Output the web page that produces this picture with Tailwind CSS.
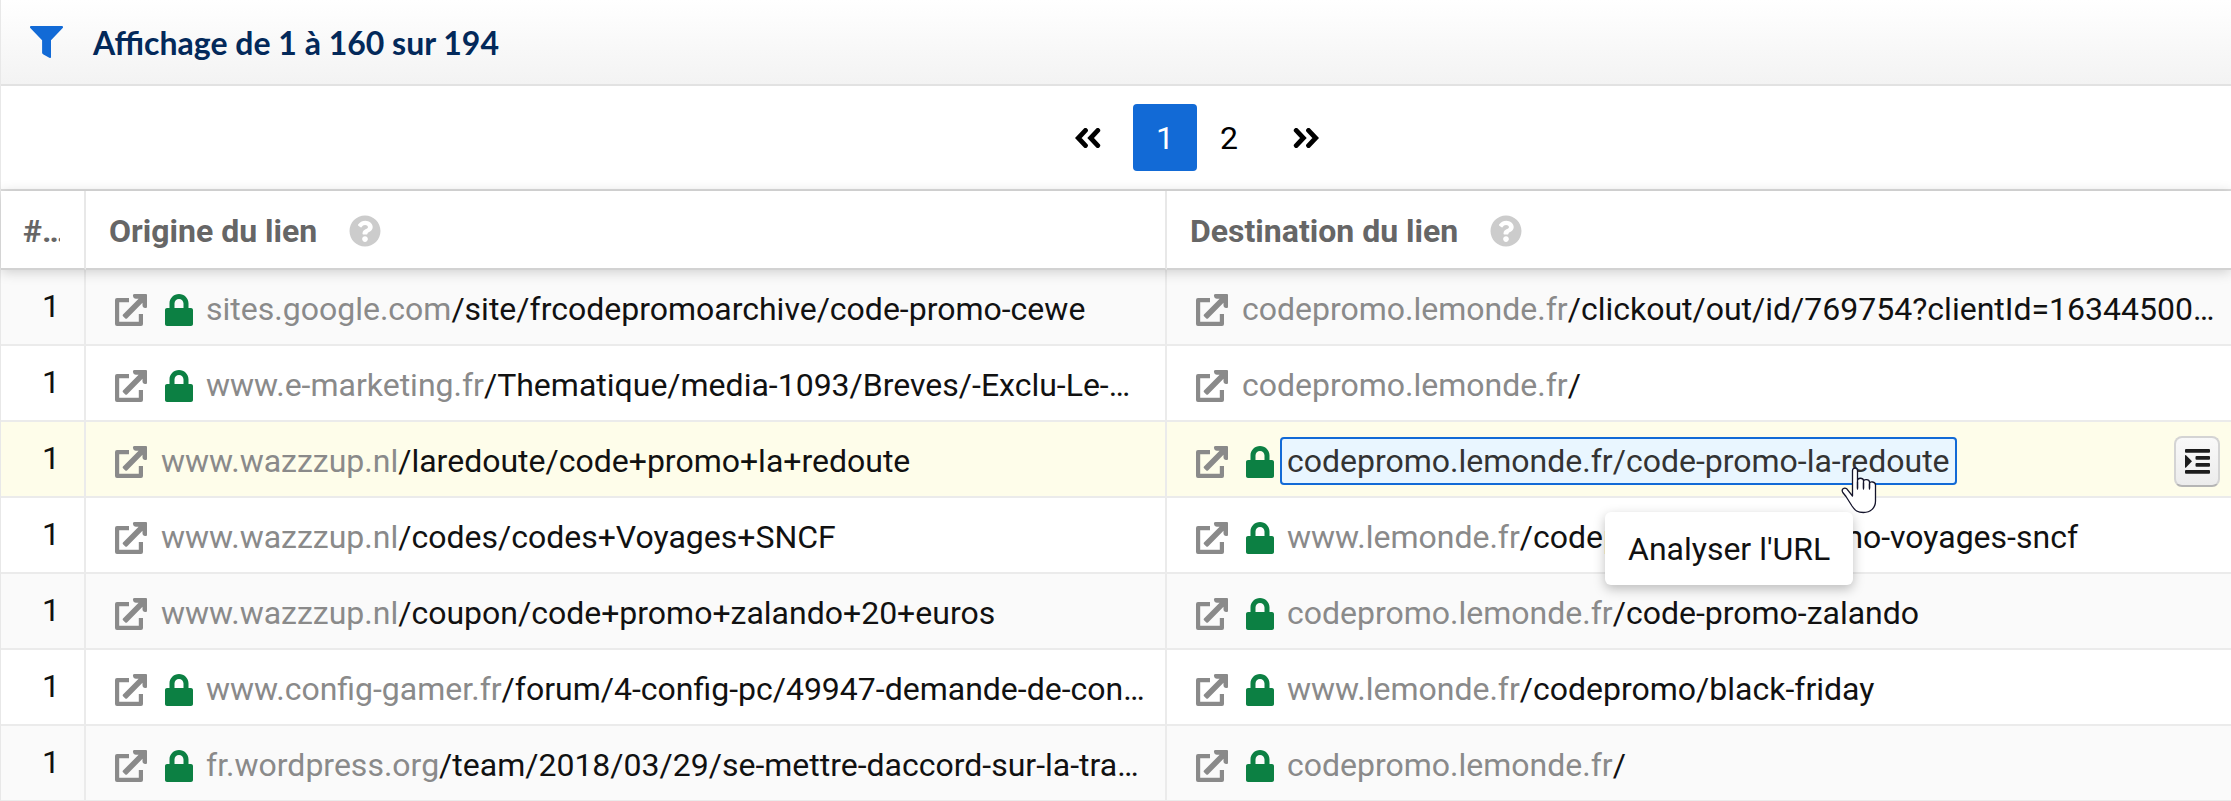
<!DOCTYPE html>
<html lang="fr">
<head>
<meta charset="utf-8">
<meta name="viewport" content="width=device-width, initial-scale=1">
<title>Liens entrants</title>
<script src="https://cdn.jsdelivr.net/npm/@tailwindcss/browser@4"></script>
</head>
<body class="h-screen overflow-hidden bg-white font-['Roboto',sans-serif] text-[32px] leading-10 text-[#111]">
<svg class="hidden" aria-hidden="true">
  <symbol id="ext" viewBox="0 0 32 32"><path fill="currentColor" d="M2 4h12v4.200H4.200v19.600h19.600V20H28v10a2 2 0 0 1-2 2H2a2 2 0 0 1-2-2V6a2 2 0 0 1 2-2zM19.500 0H31a1 1 0 0 1 1 1v11.500c0 1.300-.8 1.700-1.800 1.500-2-.3-2.700-1.200-2.700-3V8.800L12 24.400a1.200 1.200 0 0 1-1.700 0L8 22.200a1.200 1.200 0 0 1 0-1.700L23.600 4.800H21c-1.700 0-2.700-.8-3-2.700-.2-1.300.2-2.100 1.500-2.100z"/></symbol>
  <symbol id="lock" viewBox="0 0 448 512"><path fill="currentColor" d="M416 224h-40v-72C376 68.200 307.800 0 224 0S72 68.200 72 152v72H32c-17 0-32 15-32 32v224c0 17 15 32 32 32h384c17 0 32-15 32-32V256c0-17-15-32-32-32zm-120 0H152v-72c0-39.700 32.300-72 72-72s72 32.300 72 72v72z"/></symbol>
  <symbol id="help" viewBox="0 0 512 512"><path fill="currentColor" d="M504 256c0 137-111 248-248 248S8 393 8 256C8 119.100 119 8 256 8s248 111.100 248 248zM262.700 90c-54.500 0-89.300 23-116.500 63.800-3.500 5.300-2.400 12.400 2.700 16.300l34.700 26.300c5.200 3.900 12.600 3 16.700-2.100 17.900-22.700 30.100-35.800 57.300-35.800 20.400 0 45.700 13.100 45.700 33 0 15-12.400 22.700-32.500 34C247.100 238.500 216 254.900 216 296v4c0 6.600 5.400 12 12 12h56c6.600 0 12-5.400 12-12v-1.300c0-28.500 83.200-29.600 83.200-106.700 0-58-60.200-102-116.500-102zM256 338c-25.400 0-46 20.600-46 46s20.600 46 46 46 46-20.600 46-46-20.600-46-46-46z"/></symbol>
</svg>

<main class="flex flex-col border-l border-[#e8e8e8]">
  <header class="flex h-[86px] items-center border-b-2 border-[#e2e2e2] bg-linear-to-b from-white to-[#f3f3f3] pl-[29px]">
    <svg class="h-8 w-[33px] text-[#126ad6]" viewBox="0 0 33 32" aria-hidden="true"><path fill="currentColor" d="M1 0h31c1 0 1.400 1.200.7 2L21 14.300V31c0 1-.9 1.300-1.700.8L13 28.300c-.6-.4-.9-.8-.9-1.500V14.300L.3 2C-.4 1.200 0 0 1 0z"/></svg>
    <h1 class="pt-0.5 pl-[30px] font-['Lato',sans-serif] font-bold text-[#03295a]">Affichage de 1 à 160 sur 194</h1>
  </header>

  <nav class="flex h-[105px] items-center justify-center border-b-2 border-[#dcdcdc] pl-[162px] text-black" aria-label="Pagination">
    <button class="flex h-[67px] w-[90px] items-center justify-center" aria-label="Page précédente"><svg class="h-5 w-[26px]" viewBox="0 0 26 20" fill="none" stroke="currentColor" stroke-width="4.800" stroke-linecap="round" stroke-linejoin="miter"><path d="M10.500 2.400 3.300 10l7.200 7.600M22.800 2.400 15.600 10l7.200 7.600"/></svg></button>
    <button class="h-[67px] w-16 rounded-[4px] bg-[#126ad6] text-white" aria-current="page">1</button>
    <button class="h-[67px] w-16">2</button>
    <button class="flex h-[67px] w-[90px] items-center justify-center" aria-label="Page suivante"><svg class="h-5 w-[26px]" viewBox="0 0 26 20" fill="none" stroke="currentColor" stroke-width="4.800" stroke-linecap="round" stroke-linejoin="miter"><path d="M3.200 2.400 10.400 10l-7.200 7.600M15.500 2.400 22.700 10l-7.200 7.600"/></svg></button>
  </nav>

  <table class="w-full table-fixed border-separate border-spacing-0 text-left">
    <colgroup><col class="w-[85px]"><col class="w-[1081px]"><col></colgroup>
    <thead class="relative z-10 bg-white text-[#666] shadow-[0_2px_12px_rgba(0,0,0,0.18)]">
      <tr class="h-[79px]">
        <th scope="col" class="border-r-2 border-b-2 border-r-[#e8e8e8] border-b-[#d2d2d2] p-0 pt-0.5 pl-[22px]"><div class="mr-6 overflow-hidden font-bold whitespace-nowrap">#…</div></th>
        <th scope="col" class="border-r-2 border-b-2 border-r-[#e8e8e8] border-b-[#d2d2d2] p-0 pt-0.5 pl-[23px]"><div class="flex items-center gap-8">Origine du lien<svg class="size-8 text-[#ccc]"><use href="#help"/></svg></div></th>
        <th scope="col" class="border-b-2 border-[#d2d2d2] p-0 pt-0.5 pl-[23px]"><div class="flex items-center gap-8">Destination du lien<svg class="size-8 text-[#ccc]"><use href="#help"/></svg></div></th>
      </tr>
    </thead>
    <tbody>
      <tr class="h-[76px] bg-[#fafafa]">
        <td class="border-r-2 border-b-2 border-[#ebebeb] p-0 pr-6 pb-0.5 text-right">1</td>
        <td class="border-r-2 border-b-2 border-[#ebebeb] p-0 pt-1 pr-2 pl-[29px]"><div class="flex h-12 items-center whitespace-nowrap"><svg class="mt-0.5 size-8 shrink-0 text-[#8a8a8a]"><use href="#ext"/></svg><svg class="mt-0.5 ml-[18px] h-8 w-7 shrink-0 text-[#0c8043]"><use href="#lock"/></svg><a href="#" class="ml-1.5 overflow-hidden border-2 border-transparent px-[5px]"><span class="text-[#8a8a8a]">sites.google.com</span>/site/frcodepromoarchive/code-promo-cewe</a></div></td>
        <td class="border-b-2 border-[#ebebeb] p-0 pt-1 pl-[29px]"><div class="flex h-12 items-center whitespace-nowrap"><svg class="mt-0.5 size-8 shrink-0 text-[#8a8a8a]"><use href="#ext"/></svg><a href="#" class="ml-[7px] overflow-hidden border-2 border-transparent px-[5px]"><span class="text-[#8a8a8a]">codepromo.lemonde.fr</span>/clickout/out/id/769754?clientId=16344500…</a></div></td>
      </tr>
      <tr class="h-[76px] bg-white">
        <td class="border-r-2 border-b-2 border-[#ebebeb] p-0 pr-6 pb-0.5 text-right">1</td>
        <td class="border-r-2 border-b-2 border-[#ebebeb] p-0 pt-1 pr-2 pl-[29px]"><div class="flex h-12 items-center whitespace-nowrap"><svg class="mt-0.5 size-8 shrink-0 text-[#8a8a8a]"><use href="#ext"/></svg><svg class="mt-0.5 ml-[18px] h-8 w-7 shrink-0 text-[#0c8043]"><use href="#lock"/></svg><a href="#" class="ml-1.5 overflow-hidden border-2 border-transparent px-[5px]"><span class="text-[#8a8a8a]">www.e-marketing.fr</span>/Thematique/media-1093/Breves/-Exclu-Le-…</a></div></td>
        <td class="border-b-2 border-[#ebebeb] p-0 pt-1 pl-[29px]"><div class="flex h-12 items-center whitespace-nowrap"><svg class="mt-0.5 size-8 shrink-0 text-[#8a8a8a]"><use href="#ext"/></svg><a href="#" class="ml-[7px] overflow-hidden border-2 border-transparent px-[5px]"><span class="text-[#8a8a8a]">codepromo.lemonde.fr</span>/</a></div></td>
      </tr>
      <tr class="h-[76px] bg-[#fefdea]">
        <td class="border-r-2 border-b-2 border-[#ebebeb] p-0 pr-6 pb-0.5 text-right">1</td>
        <td class="border-r-2 border-b-2 border-[#ebebeb] p-0 pt-1 pr-2 pl-[29px]"><div class="flex h-12 items-center whitespace-nowrap"><svg class="mt-0.5 size-8 shrink-0 text-[#8a8a8a]"><use href="#ext"/></svg><a href="#" class="ml-[7px] overflow-hidden border-2 border-transparent px-[5px]"><span class="text-[#8a8a8a]">www.wazzzup.nl</span>/laredoute/code+promo+la+redoute</a></div></td>
        <td class="border-b-2 border-[#ebebeb] p-0 pt-1 pr-[11px] pl-[29px]"><div class="flex h-12 items-center whitespace-nowrap"><svg class="mt-0.5 size-8 shrink-0 text-[#8a8a8a]"><use href="#ext"/></svg><svg class="mt-0.5 ml-[18px] h-8 w-7 shrink-0 text-[#0c8043]"><use href="#lock"/></svg>
          <div class="relative ml-1.5">
            <a href="#" class="block h-12 rounded-[4px] border-2 border-[#126ad6] bg-[#e9f6ff] px-[5px] leading-[44px] text-[#333]" aria-describedby="tip">codepromo.lemonde.fr/code-promo-la-redoute</a>
            <div id="tip" role="tooltip" class="absolute top-[75px] left-[325px] z-20 flex h-[73px] items-center rounded-md bg-white px-[23px] text-[#111] shadow-[0_4px_12px_rgba(0,0,0,0.25)]">Analyser l'URL</div>
            <svg class="absolute top-[29px] left-[561px] z-30 h-[48px] w-[36px]" viewBox="0 0 36 48" fill="#fff" stroke="#14142b" stroke-width="1.300" stroke-linejoin="round" stroke-linecap="round" aria-hidden="true"><path d="M11.500 30V4.500a2.500 2.500 0 0 1 5 0V22v-7.500c0-3 5.700-3 6 0V22v-6.500c.3-2.700 5.700-2.300 6 .5v6-4.500c.5-2.500 6-2 6 1.500v16c0 7-5 11.500-12 11.500-6 0-8.500-2-11.500-6.500L5 30.500 1.800 26.500c-1.800-3 1.200-5.500 4-3.700z"/><path d="M16.500 16v7M22.500 17v6M28.500 18v5"/></svg>
          </div>
          <button class="ml-auto flex h-[51px] w-[46px] shrink-0 items-center justify-center rounded-lg border-2 border-[#d4d4d4] border-b-[#b5b5b5] bg-linear-to-b from-[#f9f9f9] to-[#ececec] text-[#1c1c1c]" aria-label="Actions"><svg class="h-[25px] w-[25px]" viewBox="0 0 25 25" fill="currentColor"><rect width="25" height="3.800" rx="1"/><rect x="10.500" y="7" width="14.500" height="3.800" rx="1"/><rect x="10.500" y="14" width="14.500" height="3.800" rx="1"/><rect y="21" width="25" height="3.800" rx="1"/><path d="M0 6.500c0-.6.600-.7 1-.3l6 6L1 18.600c-.4.4-1 .2-1-.4z"/></svg></button>
        </div></td>
      </tr>
      <tr class="h-[76px] bg-white">
        <td class="border-r-2 border-b-2 border-[#ebebeb] p-0 pr-6 pb-0.5 text-right">1</td>
        <td class="border-r-2 border-b-2 border-[#ebebeb] p-0 pt-1 pr-2 pl-[29px]"><div class="flex h-12 items-center whitespace-nowrap"><svg class="mt-0.5 size-8 shrink-0 text-[#8a8a8a]"><use href="#ext"/></svg><a href="#" class="ml-[7px] overflow-hidden border-2 border-transparent px-[5px]"><span class="text-[#8a8a8a]">www.wazzzup.nl</span>/codes/codes+Voyages+SNCF</a></div></td>
        <td class="border-b-2 border-[#ebebeb] p-0 pt-1 pl-[29px]"><div class="flex h-12 items-center whitespace-nowrap"><svg class="mt-0.5 size-8 shrink-0 text-[#8a8a8a]"><use href="#ext"/></svg><svg class="mt-0.5 ml-[18px] h-8 w-7 shrink-0 text-[#0c8043]"><use href="#lock"/></svg><a href="#" class="ml-1.5 overflow-hidden border-2 border-transparent px-[5px]"><span class="text-[#8a8a8a]">www.lemonde.fr</span>/codepromo/code-promo-voyages-sncf</a></div></td>
      </tr>
      <tr class="h-[76px] bg-[#fafafa]">
        <td class="border-r-2 border-b-2 border-[#ebebeb] p-0 pr-6 pb-0.5 text-right">1</td>
        <td class="border-r-2 border-b-2 border-[#ebebeb] p-0 pt-1 pr-2 pl-[29px]"><div class="flex h-12 items-center whitespace-nowrap"><svg class="mt-0.5 size-8 shrink-0 text-[#8a8a8a]"><use href="#ext"/></svg><a href="#" class="ml-[7px] overflow-hidden border-2 border-transparent px-[5px]"><span class="text-[#8a8a8a]">www.wazzzup.nl</span>/coupon/code+promo+zalando+20+euros</a></div></td>
        <td class="border-b-2 border-[#ebebeb] p-0 pt-1 pl-[29px]"><div class="flex h-12 items-center whitespace-nowrap"><svg class="mt-0.5 size-8 shrink-0 text-[#8a8a8a]"><use href="#ext"/></svg><svg class="mt-0.5 ml-[18px] h-8 w-7 shrink-0 text-[#0c8043]"><use href="#lock"/></svg><a href="#" class="ml-1.5 overflow-hidden border-2 border-transparent px-[5px]"><span class="text-[#8a8a8a]">codepromo.lemonde.fr</span>/code-promo-zalando</a></div></td>
      </tr>
      <tr class="h-[76px] bg-white">
        <td class="border-r-2 border-b-2 border-[#ebebeb] p-0 pr-6 pb-0.5 text-right">1</td>
        <td class="border-r-2 border-b-2 border-[#ebebeb] p-0 pt-1 pr-2 pl-[29px]"><div class="flex h-12 items-center whitespace-nowrap"><svg class="mt-0.5 size-8 shrink-0 text-[#8a8a8a]"><use href="#ext"/></svg><svg class="mt-0.5 ml-[18px] h-8 w-7 shrink-0 text-[#0c8043]"><use href="#lock"/></svg><a href="#" class="ml-1.5 overflow-hidden border-2 border-transparent px-[5px]"><span class="text-[#8a8a8a]">www.config-gamer.fr</span>/forum/4-config-pc/49947-demande-de-con…</a></div></td>
        <td class="border-b-2 border-[#ebebeb] p-0 pt-1 pl-[29px]"><div class="flex h-12 items-center whitespace-nowrap"><svg class="mt-0.5 size-8 shrink-0 text-[#8a8a8a]"><use href="#ext"/></svg><svg class="mt-0.5 ml-[18px] h-8 w-7 shrink-0 text-[#0c8043]"><use href="#lock"/></svg><a href="#" class="ml-1.5 overflow-hidden border-2 border-transparent px-[5px]"><span class="text-[#8a8a8a]">www.lemonde.fr</span>/codepromo/black-friday</a></div></td>
      </tr>
      <tr class="h-[76px] bg-[#fafafa]">
        <td class="border-r-2 border-b-2 border-[#ebebeb] p-0 pr-6 pb-0.5 text-right">1</td>
        <td class="border-r-2 border-b-2 border-[#ebebeb] p-0 pt-1 pr-2 pl-[29px]"><div class="flex h-12 items-center whitespace-nowrap"><svg class="mt-0.5 size-8 shrink-0 text-[#8a8a8a]"><use href="#ext"/></svg><svg class="mt-0.5 ml-[18px] h-8 w-7 shrink-0 text-[#0c8043]"><use href="#lock"/></svg><a href="#" class="ml-1.5 overflow-hidden border-2 border-transparent px-[5px]"><span class="text-[#8a8a8a]">fr.wordpress.org</span>/team/2018/03/29/se-mettre-daccord-sur-la-tra…</a></div></td>
        <td class="border-b-2 border-[#ebebeb] p-0 pt-1 pl-[29px]"><div class="flex h-12 items-center whitespace-nowrap"><svg class="mt-0.5 size-8 shrink-0 text-[#8a8a8a]"><use href="#ext"/></svg><svg class="mt-0.5 ml-[18px] h-8 w-7 shrink-0 text-[#0c8043]"><use href="#lock"/></svg><a href="#" class="ml-1.5 overflow-hidden border-2 border-transparent px-[5px]"><span class="text-[#8a8a8a]">codepromo.lemonde.fr</span>/</a></div></td>
      </tr>
    </tbody>
  </table>
</main>
</body>
</html>
